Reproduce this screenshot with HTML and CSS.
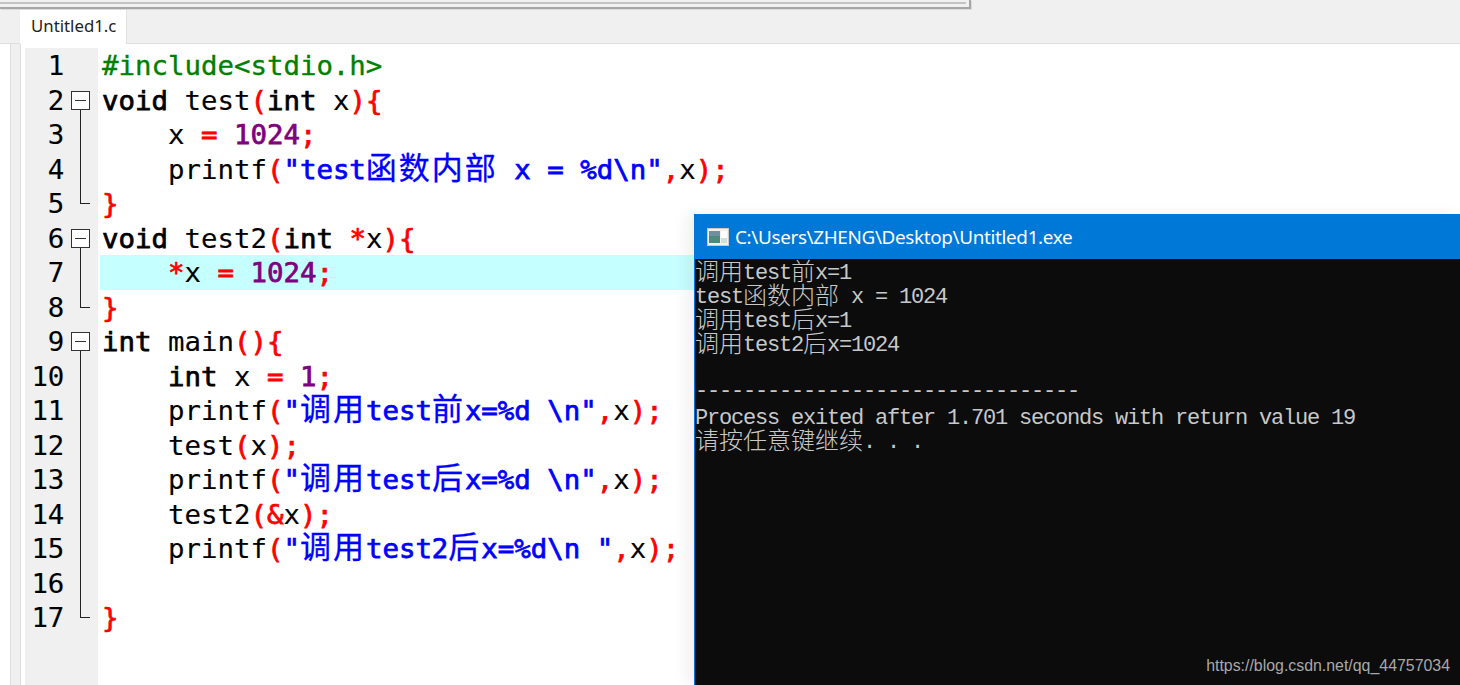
FILE: index.html
```html
<!DOCTYPE html>
<html lang="zh">
<head>
<meta charset="utf-8">
<title>Untitled1.c</title>
<link rel="stylesheet" href="styles.css">
</head>
<body>
<div class="app">
  <div class="frame"><div class="frame-inner"></div></div>
  <div class="tabbar"><div class="tab">Untitled1.c</div></div>
  <div class="workspace">
    <div class="side"></div>
    <div class="side-gap"></div>
    <div class="editor">
      <div class="row"><span class="num">1</span><span class="fold"></span><span class="code"><span class="pp">#include&lt;stdio.h&gt;</span></span></div>
      <div class="row"><span class="num">2</span><span class="fold box"></span><span class="code"><b>void</b> test<i>(</i><b>int</b> x<i>){</i></span></div>
      <div class="row"><span class="num">3</span><span class="fold line"></span><span class="code">    x <i>=</i> <u>1024</u><i>;</i></span></div>
      <div class="row"><span class="num">4</span><span class="fold line"></span><span class="code">    printf<i>(</i><em>"test<span class="cjk">函数内部</span> x = %d\n"</em><i>,</i>x<i>);</i></span></div>
      <div class="row"><span class="num">5</span><span class="fold end"></span><span class="code"><i>}</i></span></div>
      <div class="row"><span class="num">6</span><span class="fold box"></span><span class="code"><b>void</b> test2<i>(</i><b>int</b> <i>*</i>x<i>){</i></span></div>
      <div class="row"><span class="num">7</span><span class="fold line"></span><span class="code current">    <i>*</i>x <i>=</i> <u>1024</u><i>;</i></span></div>
      <div class="row"><span class="num">8</span><span class="fold end"></span><span class="code"><i>}</i></span></div>
      <div class="row"><span class="num">9</span><span class="fold box"></span><span class="code"><b>int</b> main<i>(){</i></span></div>
      <div class="row"><span class="num">10</span><span class="fold line"></span><span class="code">    <b>int</b> x <i>=</i> <u>1</u><i>;</i></span></div>
      <div class="row"><span class="num">11</span><span class="fold line"></span><span class="code">    printf<i>(</i><em>"<span class="cjk">调用</span>test<span class="cjk">前</span>x=%d \n"</em><i>,</i>x<i>);</i></span></div>
      <div class="row"><span class="num">12</span><span class="fold line"></span><span class="code">    test<i>(</i>x<i>);</i></span></div>
      <div class="row"><span class="num">13</span><span class="fold line"></span><span class="code">    printf<i>(</i><em>"<span class="cjk">调用</span>test<span class="cjk">后</span>x=%d \n"</em><i>,</i>x<i>);</i></span></div>
      <div class="row"><span class="num">14</span><span class="fold line"></span><span class="code">    test2<i>(&amp;</i>x<i>);</i></span></div>
      <div class="row"><span class="num">15</span><span class="fold line"></span><span class="code">    printf<i>(</i><em>"<span class="cjk">调用</span>test2<span class="cjk">后</span>x=%d\n "</em><i>,</i>x<i>);</i></span></div>
      <div class="row"><span class="num">16</span><span class="fold line"></span><span class="code"></span></div>
      <div class="row"><span class="num">17</span><span class="fold end"></span><span class="code"><i>}</i></span></div>
      <div class="row filler"><span class="num"></span></div>
    </div>
  </div>
</div>
<section class="console">
  <header class="console-title">
    <svg class="console-icon" width="22" height="18" viewBox="0 0 22 18" aria-hidden="true">
      <rect x="0.5" y="0.5" width="21" height="17" fill="#f1f1f1" stroke="#c9c9c9"/>
      <rect x="2" y="3" width="11" height="12" fill="#4f8a78"/>
      <rect x="2" y="3" width="11" height="5" fill="#6f8fa0"/>
      <rect x="14" y="3" width="6" height="7" fill="#ffffff"/>
      <rect x="14" y="10" width="6" height="5" fill="#cfe0d8"/>
    </svg>
    <span>C:\Users\ZHENG\Desktop\Untitled1.exe</span>
  </header>
  <div class="console-body">
    <div class="cline"><span class="zh">调用</span>test<span class="zh">前</span>x=1</div>
    <div class="cline">test<span class="zh">函数内部</span> x = 1024</div>
    <div class="cline"><span class="zh">调用</span>test<span class="zh">后</span>x=1</div>
    <div class="cline"><span class="zh">调用</span>test2<span class="zh">后</span>x=1024</div>
    <div class="cline"></div>
    <div class="cline rule">--------------------------------</div>
    <div class="cline">Process exited after 1.701 seconds with return value 19</div>
    <div class="cline"><span class="zh">请按任意键继续</span>. . .</div>
  </div>
</section>
<div class="watermark">https://blog.csdn.net/qq_44757034</div>
</body>
</html>
```
FILE: styles.css
```css
html, body { margin: 0; height: 100%; overflow: hidden; background: #fff; }
.app { display: flex; flex-direction: column; height: 685px; background: #fff; }

.frame { height: 10px; flex: none; background: #f0f0f0; box-sizing: border-box; padding-right: 489px; }
.frame-inner { height: 9px; box-sizing: border-box; border-bottom: 2px solid #a6a6a6; border-right: 2px solid #a6a6a6; box-shadow: 1px 1px 0 #dcdcdc, inset 0 -3px 0 #f0f0f0, inset -3px 0 0 #f0f0f0, inset 0 -5px 0 #c4c4c4; background: linear-gradient(#f0f0f0 2px, #c2c2c2 2px, #c2c2c2 3px, #efefef 3px); }

.tabbar { height: 33px; flex: none; display: flex; background: #f0f0f0; border-bottom: 1px solid #dedede; padding-left: 20px; }
.tab { width: 107px; height: 34px; box-sizing: border-box; background: #fff; border-right: 1px solid #e2e2e2; padding: 5px 0 0 11px; font: 16.8px/21px "Noto Sans", sans-serif; color: #222; }

.workspace { flex: 1; display: flex; min-height: 0; }
.side { width: 10px; background: #fff; border-right: 1px solid #dcdcdc; }
.side-gap { width: 9px; background: #f0f0f0; border-right: 1px solid #dcdcdc; }
.editor { flex: 1; display: flex; flex-direction: column; padding: 4px 0 0 4px; font: 27.4px/34.5px "DejaVu Sans Mono", monospace; color: #000; -webkit-text-stroke: 0.15px currentColor; }

.row { display: flex; height: 34.5px; flex: none; }
.row.filler { flex: 1; }
.num { width: 46px; box-sizing: border-box; background: #f0f0f0; text-align: right; padding: 1px 7px 0 0; letter-spacing: -0.2px; }
.fold { width: 27px; flex: none; background: #f0f0f0; position: relative; }
.filler .num { width: 73px; }
.code { flex: 1; margin-left: 2px; padding: 1px 0 0 2px; white-space: pre; }
.code.current { background: #c6ffff; }

.code b, .code i, .code u, .code em { font-weight: 400; -webkit-text-stroke: 0.75px currentColor; }
.code i { font-style: normal; color: #f00; }
.code u { text-decoration: none; color: #800080; }
.code em { font-style: normal; color: #0000ff; }
.pp { color: #008000; -webkit-text-stroke: 0.35px currentColor; }
.cjk { font-family: "Noto Sans CJK SC", sans-serif; font-size: 31px; letter-spacing: 2px; font-weight: 400; line-height: 0; -webkit-text-stroke: 0.3px currentColor; }

.fold.line::before, .fold.end::before { content: ""; position: absolute; left: 9px; top: 0; width: 1px; background: #222; height: 100%; }
.fold.end::before { height: 17px; }
.fold.end::after { content: ""; position: absolute; left: 9px; top: 17px; width: 10px; height: 1px; background: #222; }
.fold.box { background: linear-gradient(#222, #222) no-repeat 9px 100% / 1px 8px, #f0f0f0; }
.fold.box::before { content: ""; position: absolute; left: 0; top: 8px; width: 19px; height: 19px; box-sizing: border-box; border: 1px solid #333; background: #fff; }
.fold.box::after { content: ""; position: absolute; left: 4px; top: 17px; width: 11px; height: 1px; background: #333; }

.console { position: absolute; left: 694px; top: 214px; width: 766px; height: 471px; display: flex; flex-direction: column; box-sizing: border-box; border-left: 1px solid #0078d7; background: #0c0c0c; box-shadow: -8px 0 14px rgba(0,0,0,0.06); }
.console-title { height: 45px; flex: none; background: #0078d7; color: #fff; display: flex; align-items: center; padding-left: 12px; gap: 6px; font: 18.9px/26px "Noto Sans", sans-serif; letter-spacing: -0.35px; }
.console-icon { flex: none; }
.console-body { padding-top: 3px; flex: 1; font: 22px/24px "Liberation Mono", monospace; letter-spacing: -1.2px; color: #c8c8c8; }
.cline { height: 24px; white-space: pre; }
.cline.rule { height: 25px; line-height: 19px; }
.zh { font-family: "Noto Sans CJK SC", sans-serif; font-size: 24px; letter-spacing: 0; font-weight: 300; line-height: 0; vertical-align: -1px; }

.watermark { position: absolute; right: 10px; top: 656px; font: 15.9px/20px "Liberation Sans", sans-serif; color: #a8a8a8; }
```
